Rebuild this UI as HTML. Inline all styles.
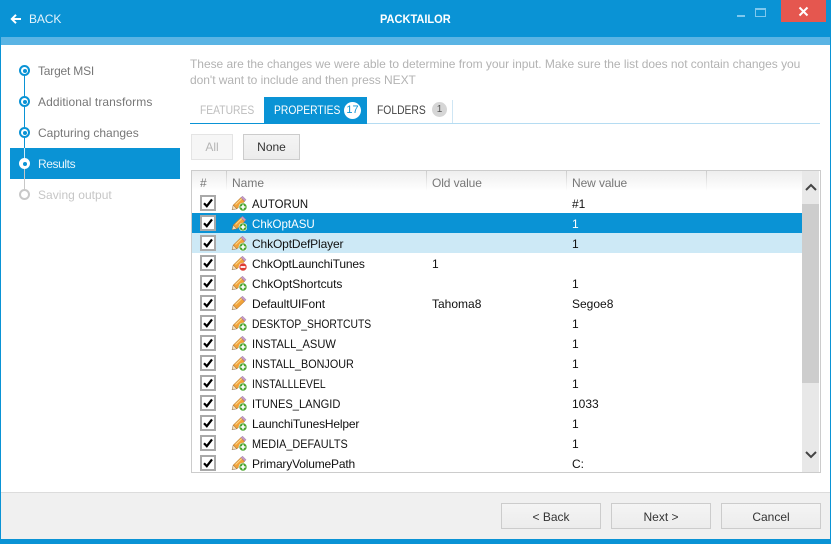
<!DOCTYPE html>
<html><head><meta charset="utf-8"><style>
html,body{margin:0;padding:0}
body{width:831px;height:544px;position:relative;overflow:hidden;background:#fff;font:12px "Liberation Sans",sans-serif;color:#111}
.a{position:absolute;white-space:nowrap}
.t{position:absolute;white-space:nowrap;line-height:16px;height:16px;transform-origin:0 50%}
.tb{transform:scaleX(.86)}
.btn{position:absolute;box-sizing:border-box;border:1px solid #ccc;text-align:center;color:#333;background:linear-gradient(#f4f4f4,#ececec)}
.dot{position:absolute;left:19px;width:11px;height:11px;box-sizing:border-box;border:2px solid #0a93d5;border-radius:50%;background:#fff}
.dot:after{content:"";position:absolute;left:1.5px;top:1.5px;width:4px;height:4px;background:#0a93d5;border-radius:50%}
.dot.off:after{display:none}
.dot.sel{border-color:#fff}
.side{left:38px;color:#777}
.cb{position:absolute;left:200px;width:16px;height:16px;box-sizing:border-box;border:2px solid #a9a9a9;background:#fff}
.cb svg{display:block;width:12px;height:12px}
.ic{position:absolute;left:231px;width:16px;height:16px}
.sep{position:absolute;top:171px;height:20px;width:1px;background:linear-gradient(#ccc,#fff)}
</style></head><body>
<svg width="0" height="0" style="position:absolute"><defs>
<symbol id="p" viewBox="0 0 16 16"><path d="M2.2 10.2L10 2.6l3.6 3.6-7.8 7.6z" fill="#f2a33a" stroke="#c07f2c" stroke-width=".6"/><path d="M4.5 9.5l6.8-6.6" stroke="#fbd58a" stroke-width="1.2"/><path d="M10 2.6l1.5-1.4 3.5 3.5-1.4 1.5z" fill="#c79ac9" stroke="#94709a" stroke-width=".5"/><path d="M2.2 10.2L1 14.8l4.8-1z" fill="#f4dcb4" stroke="#8f7250" stroke-width=".5"/></symbol>
<symbol id="pa" viewBox="0 0 16 16"><use href="#p"/><circle cx="12" cy="12" r="4" fill="#4aa52e" stroke="#fff" stroke-width=".6"/><path d="M12 9.6v4.8M9.6 12h4.8" stroke="#fff" stroke-width="1.6"/></symbol>
<symbol id="pr" viewBox="0 0 16 16"><use href="#p"/><circle cx="12" cy="12" r="4" fill="#de3d32" stroke="#fff" stroke-width=".6"/><path d="M9.6 12h4.8" stroke="#fff" stroke-width="1.8"/></symbol>
<symbol id="ck" viewBox="0 0 12 12"><path d="M2 6.2L4.8 9.2 10 2.4" fill="none" stroke="#000" stroke-width="2.2"/></symbol>
</defs></svg>

<!-- window frame -->
<div class="a" style="left:0;top:0;width:831px;height:37px;background:#0a93d5"></div>
<div class="a" style="left:1px;top:37px;width:829px;height:8px;background:#5ab4e4"></div>
<div class="a" style="left:0;top:37px;width:1px;height:507px;background:#0a93d5"></div>
<div class="a" style="left:830px;top:37px;width:1px;height:507px;background:#0a93d5"></div>
<div class="a" style="left:1px;top:492px;width:829px;height:47px;background:#f0f0f0;border-top:1px solid #dcdcdc;box-sizing:border-box"></div>
<div class="a" style="left:0;top:539px;width:831px;height:5px;background:#0a93d5"></div>

<svg class="a" style="left:10px;top:13px" width="12" height="12" viewBox="0 0 12 12"><path d="M11 6H2M6 1.8L1.8 6 6 10.2" fill="none" stroke="#fff" stroke-width="2"/></svg>
<div class="t" style="left:29px;top:11px;color:#e4f3fb;letter-spacing:-.1px">BACK</div>
<div class="t" style="left:380px;top:11px;color:#fff;font-weight:bold;transform:scaleX(.92)">PACKTAILOR</div>

<div class="a" style="left:737px;top:15px;width:8px;height:2px;background:#7fc8ee"></div>
<div class="a" style="left:755px;top:8px;width:11px;height:9px;box-sizing:border-box;border:1px solid #7fc8ee;border-top-width:2px"></div>
<div class="a" style="left:781px;top:0;width:45px;height:22px;background:#e5574f"></div>
<svg class="a" style="left:798px;top:6px" width="11" height="11" viewBox="0 0 11 11"><path d="M1.5 1.5l8 8M9.5 1.5l-8 8" stroke="#fff" stroke-width="2"/></svg>

<!-- sidebar -->
<div class="a" style="left:10px;top:148px;width:170px;height:31px;background:#0a93d5"></div>
<div class="a" style="left:24px;top:71px;width:1px;height:77px;background:#0a93d5"></div>
<div class="a" style="left:24px;top:148px;width:1px;height:16px;background:#cfeaf8"></div>
<div class="a" style="left:24px;top:164px;width:1px;height:31px;background:#c8c8c8"></div>
<div class="dot" style="top:65px"></div>
<div class="dot" style="top:96px"></div>
<div class="dot" style="top:127px"></div>
<div class="dot sel" style="top:158px"></div>
<div class="dot off" style="top:189px;border-color:#c8c8c8"></div>
<div class="t side" style="top:63px;letter-spacing:-.2px">Target MSI</div>
<div class="t side" style="top:94px;letter-spacing:.08px">Additional transforms</div>
<div class="t side" style="top:125px">Capturing changes</div>
<div class="t side" style="top:156px;color:#e6f4fb;letter-spacing:-.4px">Results</div>
<div class="t side" style="top:187px;color:#c6c6c6;letter-spacing:.03px">Saving output</div>

<!-- description -->
<div class="t" style="left:190px;top:56px;color:#b3b3b3;letter-spacing:-.03px">These are the changes we were able to determine from your input. Make sure the list does not contain changes you</div>
<div class="t" style="left:190px;top:72px;color:#b3b3b3;letter-spacing:-.03px">don't want to include and then press NEXT</div>

<!-- tabs -->
<div class="a" style="left:190px;top:123px;width:630px;height:1px;background:#b5dcf2"></div>
<div class="a" style="left:190px;top:123px;width:177px;height:1px;background:#0a93d5"></div>
<div class="a" style="left:264px;top:97px;width:103px;height:27px;background:#0a93d5"></div>
<div class="a" style="left:452px;top:100px;width:1px;height:23px;background:#cfe6f4"></div>
<div class="t tb" style="left:200px;top:102px;color:#bdbdbd">FEATURES</div>
<div class="t tb" style="left:274px;top:102px;color:#fff">PROPERTIES</div>
<div class="a" style="left:344px;top:102px;width:17px;height:17px;border-radius:50%;background:#fff;color:#0a93d5;text-align:center;line-height:17px;font-size:11px">17</div>
<div class="t tb" style="left:377px;top:102px;color:#444">FOLDERS</div>
<div class="a" style="left:432px;top:102px;width:15px;height:15px;border-radius:50%;background:#d6d6d6;color:#555;text-align:center;line-height:16px;font-size:10px">1</div>

<!-- buttons -->
<div class="btn" style="left:191px;top:134px;width:42px;height:26px;line-height:25px;color:#b5b5b5;background:#f6f6f6;border-color:#e4e4e4">All</div>
<div class="btn" style="left:243px;top:134px;width:57px;height:26px;line-height:25px">None</div>

<!-- table -->
<div class="a" style="left:191px;top:170px;width:630px;height:303px;box-sizing:border-box;border:1px solid #ccc"></div>
<div class="a" style="left:192px;top:171px;width:610px;height:20px;background:linear-gradient(#eee,#fff)"></div>
<div class="sep" style="left:226px"></div><div class="sep" style="left:426px"></div><div class="sep" style="left:566px"></div><div class="sep" style="left:706px"></div>
<div class="t" style="left:200px;top:175px;color:#777">#</div>
<div class="t" style="left:232px;top:175px;color:#777">Name</div>
<div class="t" style="left:432px;top:175px;color:#777;letter-spacing:-.1px">Old value</div>
<div class="t" style="left:572px;top:175px;color:#777;letter-spacing:-.1px">New value</div>

<div class="a" style="left:192px;top:213px;width:610px;height:20px;background:#0a93d5"></div>
<div class="a" style="left:192px;top:233px;width:610px;height:20px;background:#cde9f6"></div>

<div class="cb" style="top:195px"><svg><use href="#ck"/></svg></div>
<div class="cb" style="top:215px"><svg><use href="#ck"/></svg></div>
<div class="cb" style="top:235px"><svg><use href="#ck"/></svg></div>
<div class="cb" style="top:255px"><svg><use href="#ck"/></svg></div>
<div class="cb" style="top:275px"><svg><use href="#ck"/></svg></div>
<div class="cb" style="top:295px"><svg><use href="#ck"/></svg></div>
<div class="cb" style="top:315px"><svg><use href="#ck"/></svg></div>
<div class="cb" style="top:335px"><svg><use href="#ck"/></svg></div>
<div class="cb" style="top:355px"><svg><use href="#ck"/></svg></div>
<div class="cb" style="top:375px"><svg><use href="#ck"/></svg></div>
<div class="cb" style="top:395px"><svg><use href="#ck"/></svg></div>
<div class="cb" style="top:415px"><svg><use href="#ck"/></svg></div>
<div class="cb" style="top:435px"><svg><use href="#ck"/></svg></div>
<div class="cb" style="top:455px"><svg><use href="#ck"/></svg></div>

<svg class="ic" style="top:195px"><use href="#pa"/></svg>
<svg class="ic" style="top:215px"><use href="#pa"/></svg>
<svg class="ic" style="top:235px"><use href="#pa"/></svg>
<svg class="ic" style="top:255px"><use href="#pr"/></svg>
<svg class="ic" style="top:275px"><use href="#pa"/></svg>
<svg class="ic" style="top:295px"><use href="#p"/></svg>
<svg class="ic" style="top:315px"><use href="#pa"/></svg>
<svg class="ic" style="top:335px"><use href="#pa"/></svg>
<svg class="ic" style="top:355px"><use href="#pa"/></svg>
<svg class="ic" style="top:375px"><use href="#pa"/></svg>
<svg class="ic" style="top:395px"><use href="#pa"/></svg>
<svg class="ic" style="top:415px"><use href="#pa"/></svg>
<svg class="ic" style="top:435px"><use href="#pa"/></svg>
<svg class="ic" style="top:455px"><use href="#pa"/></svg>

<div class="t" style="left:252px;top:196px;transform:scaleX(.95)">AUTORUN</div><div class="t" style="left:572px;top:196px">#1</div>
<div class="t" style="left:252px;top:216px;color:#fff;transform:scaleX(.96)">ChkOptASU</div><div class="t" style="left:572px;top:216px;color:#fff">1</div>
<div class="t" style="left:252px;top:236px;letter-spacing:-.13px">ChkOptDefPlayer</div><div class="t" style="left:572px;top:236px">1</div>
<div class="t" style="left:252px;top:256px;letter-spacing:-.16px">ChkOptLaunchiTunes</div><div class="t" style="left:432px;top:256px">1</div>
<div class="t" style="left:252px;top:276px;letter-spacing:-.07px">ChkOptShortcuts</div><div class="t" style="left:572px;top:276px">1</div>
<div class="t" style="left:252px;top:296px;letter-spacing:-.08px">DefaultUIFont</div><div class="t" style="left:432px;top:296px">Tahoma8</div><div class="t" style="left:572px;top:296px">Segoe8</div>
<div class="t" style="left:252px;top:316px;transform:scaleX(.862)">DESKTOP_SHORTCUTS</div><div class="t" style="left:572px;top:316px">1</div>
<div class="t" style="left:252px;top:336px;transform:scaleX(.927)">INSTALL_ASUW</div><div class="t" style="left:572px;top:336px">1</div>
<div class="t" style="left:252px;top:356px;transform:scaleX(.9)">INSTALL_BONJOUR</div><div class="t" style="left:572px;top:356px">1</div>
<div class="t" style="left:252px;top:376px;transform:scaleX(.865)">INSTALLLEVEL</div><div class="t" style="left:572px;top:376px">1</div>
<div class="t" style="left:252px;top:396px;transform:scaleX(.927)">ITUNES_LANGID</div><div class="t" style="left:572px;top:396px">1033</div>
<div class="t" style="left:252px;top:416px;letter-spacing:-.17px">LaunchiTunesHelper</div><div class="t" style="left:572px;top:416px">1</div>
<div class="t" style="left:252px;top:436px;transform:scaleX(.905)">MEDIA_DEFAULTS</div><div class="t" style="left:572px;top:436px">1</div>
<div class="t" style="left:252px;top:456px;letter-spacing:-.18px">PrimaryVolumePath</div><div class="t" style="left:572px;top:456px">C:</div>

<!-- scrollbar -->
<div class="a" style="left:802px;top:171px;width:17px;height:301px;background:#e8e8e8"></div>
<div class="a" style="left:802px;top:204px;width:17px;height:179px;background:#cdcdcd"></div>
<svg class="a" style="left:805px;top:183px" width="12" height="9" viewBox="0 0 12 9"><path d="M1 7l5-5 5 5" fill="none" stroke="#444" stroke-width="2"/></svg>
<svg class="a" style="left:805px;top:450px" width="12" height="9" viewBox="0 0 12 9"><path d="M1 2l5 5 5-5" fill="none" stroke="#444" stroke-width="2"/></svg>

<!-- footer -->
<div class="btn" style="left:501px;top:503px;width:100px;height:26px;line-height:26px">&lt; Back</div>
<div class="btn" style="left:611px;top:503px;width:100px;height:26px;line-height:26px">Next &gt;</div>
<div class="btn" style="left:721px;top:503px;width:100px;height:26px;line-height:26px">Cancel</div>
</body></html>
